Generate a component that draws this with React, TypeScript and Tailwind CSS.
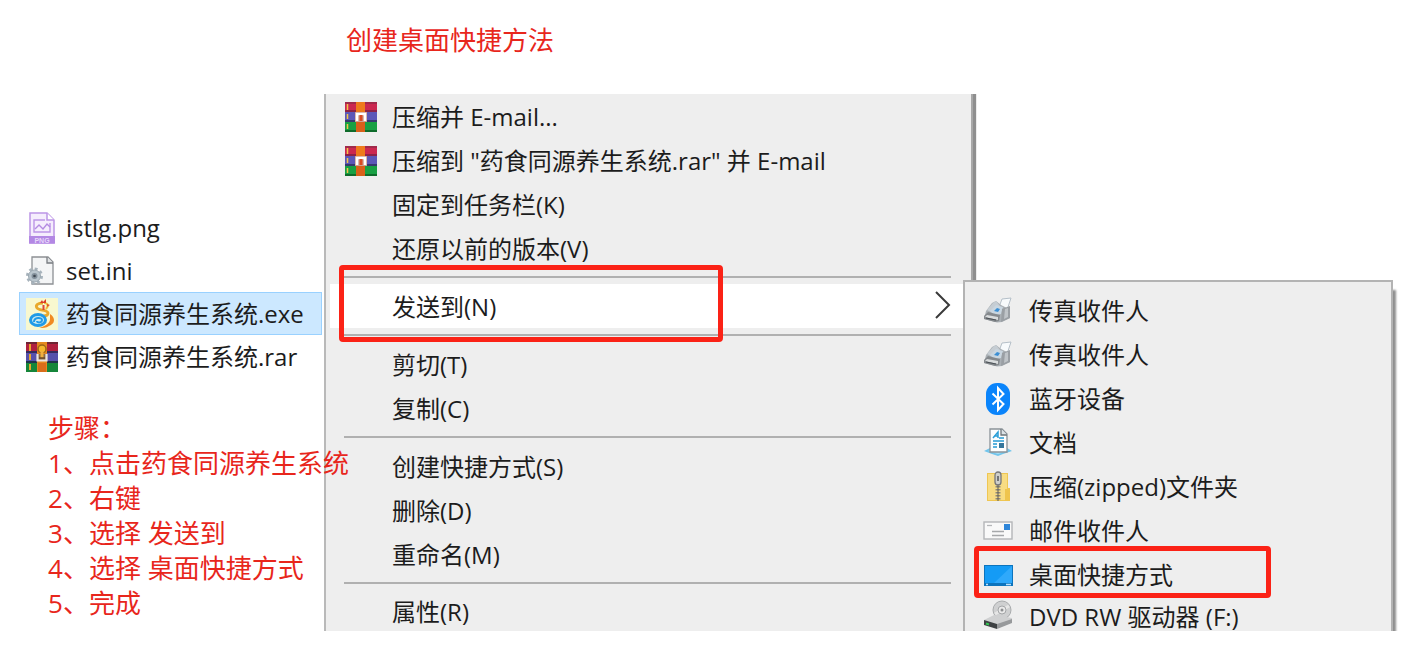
import type { ReactNode } from "react";

interface MenuEntry {
  label: string;
  icon?: ReactNode;
  boxed?: boolean;
}

function RarIcon() {
  return (
    <svg viewBox="0 0 32 30" className="h-[30px] w-8 shrink-0">
      <rect width="32" height="10" fill="#cb2750" />
      <rect width="32" height="2" fill="#a02a4a" />
      <rect y="8" width="32" height="2" fill="#8d2247" />
      <rect y="10" width="32" height="9" fill="#5b57b8" />
      <rect y="18" width="32" height="2" fill="#36396f" />
      <rect y="20" width="32" height="10" fill="#18a043" />
      <rect y="28" width="32" height="2" fill="#0e6b2a" />
      <path d="M2.500 2v6M2.500 12v5M2.500 22v5" stroke="#f3c54a" strokeWidth="1.500" />
      <rect x="11" width="9" height="30" fill="#ee7a1c" />
      <rect x="11" y="20" width="9" height="10" fill="#d8601a" />
      <rect x="10" y="10" width="12" height="10" fill="#cfa294" />
      <path d="M12 19v-7h8v7" fill="none" stroke="#fff" strokeWidth="2.500" />
      <path d="M14.500 19v-6h3v6" fill="#d94a23" />
    </svg>
  );
}

function RarFileIcon() {
  return (
    <svg viewBox="0 0 32 30" className="h-[30px] w-8 shrink-0">
      <rect width="32" height="10" fill="#b0203f" />
      <rect width="32" height="2" fill="#6e2534" />
      <rect y="10" width="32" height="10" fill="#5650ab" />
      <rect y="9" width="32" height="2" fill="#352b5c" />
      <rect y="20" width="32" height="10" fill="#16863a" />
      <rect y="19" width="32" height="2" fill="#20324b" />
      <path d="M4 2v7M4 12v6M4 22v6" stroke="#e8a72e" strokeWidth="2" />
      <rect x="11" width="10" height="30" fill="#e5891f" />
      <rect x="12" y="21" width="8" height="9" fill="#d96d1b" />
      <circle cx="16" cy="7" r="4" fill="#f6b62d" stroke="#9a6618" strokeWidth="1.500" />
      <path d="M11.500 12v6.500h9V12" fill="#8a6a45" stroke="#ece5df" strokeWidth="2.200" />
      <path d="M16 9v7" stroke="#f0b040" strokeWidth="3" />
      <path d="M13 16h6" stroke="#6b4a28" strokeWidth="1.500" />
    </svg>
  );
}

function PngIcon() {
  return (
    <svg viewBox="0 0 32 32" className="size-8 shrink-0">
      <path d="M4 1h17l7 7v23H4z" fill="#f5edfd" stroke="#bc95e6" strokeWidth="1.500" />
      <path d="M21 1v7h7" fill="#fff" stroke="#bc95e6" strokeWidth="1.500" />
      <path d="M19 8H8v12h16V11" fill="none" stroke="#bc95e6" strokeWidth="1.400" />
      <path d="m9 17 4-4 4 4 4-5 3 3" fill="none" stroke="#b48be2" strokeWidth="1.400" />
      <rect x="3" y="24" width="26" height="7.500" fill="#b388e4" />
      <text x="16" y="30.500" textAnchor="middle" fontSize="7" fontFamily="Liberation Sans, sans-serif" fontWeight="700" fill="#e7d6fa">
        PNG
      </text>
    </svg>
  );
}

function IniIcon() {
  return (
    <svg viewBox="0 0 32 32" className="size-8 shrink-0">
      <path d="M6 2h16l5 5v22H6z" fill="#f4f5f6" stroke="#8d9094" strokeWidth="1.300" />
      <path d="M21 2v6h6" fill="#dfe2e4" stroke="#777b80" strokeWidth="1.300" />
      <circle cx="8.500" cy="21" r="7" fill="none" stroke="#a7b3bc" strokeWidth="3" strokeDasharray="2.750 2.750" />
      <circle cx="8.500" cy="21" r="6" fill="#b9c5cd" stroke="#9ba8b1" />
      <circle cx="8.500" cy="21" r="3" fill="#84919c" />
      <circle cx="8.500" cy="21" r="1.300" fill="#3f4952" />
    </svg>
  );
}

function AppIcon() {
  return (
    <svg viewBox="0 0 32 32" className="size-8 shrink-0">
      <rect width="32" height="32" fill="#f8f8cf" />
      <path d="M17 5c-5 0-8 2-6 5 2 3 10 1 11 5 0 3-3 3-7 3" fill="none" stroke="#e9a92d" strokeWidth="2.800" />
      <path d="M18 5c4 0 5 3 2 6" fill="none" stroke="#f0bb3e" strokeWidth="2.200" />
      <path d="M14 5l2-3 1 2 3-3v4z" fill="#dc3b27" />
      <path d="m21 6 3 1-3 2z" fill="#e0522b" />
      <path d="M17.500 7v5" stroke="#dd4632" strokeWidth="2" />
      <ellipse cx="12" cy="22" rx="7.500" ry="5.500" fill="#c9e9ef" stroke="#1f9be8" strokeWidth="3" />
      <path d="M8 24c0-5 8-5 8-2 0 3-5 3-5 1" fill="none" stroke="#1f9be8" strokeWidth="2" />
      <path d="M24 16c6 4 5 10-1 12-3 2-6 2-10 2 7-2 11-5 11-9z" fill="#f08a22" />
    </svg>
  );
}

function FaxIcon() {
  return (
    <svg viewBox="0 0 32 32" className="size-8 shrink-0">
      <path d="M17 12 20 4l9-1-4 12z" fill="#f7fafc" stroke="#b5c0c9" />
      <path d="m4 16 6-8 4-2 5 4 6 3 3-1v11l-8 4-5 .5L2 24z" fill="#aab0b5" />
      <path d="m5 15 6-7 3-2 4 5-3 3-6 3z" fill="#c6cdd3" />
      <path d="m8 16 6-6 7 2-2 7-7 1z" fill="#c9d6e0" />
      <path d="m12 16 3-3 3 1-2 3z" fill="#3c8fd4" />
      <path d="m20 14 8-3v12l-9 4z" fill="#9a9fa4" />
      <path d="m23 14 3-1v9l-4 2z" fill="#bfc4c8" />
      <path d="m2 21 4-4 12 3-1 6-4 1-11-3z" fill="#85898d" />
      <path d="m3 22 2-2 11 2v3z" fill="#d9dcdd" />
      <path d="m4 23 10 2" stroke="#4c5257" />
    </svg>
  );
}

function BluetoothIcon() {
  return (
    <svg viewBox="0 0 32 32" className="size-8 shrink-0">
      <rect x="4" y="0" width="24" height="32" rx="11" fill="#0a84fb" />
      <path d="m10.500 10.500 11 10.500-5.500 6V5l5.500 6-11 10.500" fill="none" stroke="#fff" strokeWidth="2" />
    </svg>
  );
}

function DocumentIcon() {
  return (
    <svg viewBox="0 0 32 32" className="size-8 shrink-0">
      <path d="m2 24 6-3h17l5 3-9 3-5 2-6-2z" fill="#71c5ec" />
      <path d="m6 24 5-2h10l5 2-10 3z" fill="#a9dff5" />
      <path d="M8 2h12l5 5v18H8z" fill="#fdfefe" stroke="#8a9298" strokeWidth="1.300" />
      <path d="M19 2v6h6" fill="#dce3e7" stroke="#6e757a" strokeWidth="1.300" />
      <path d="m11 11 5-6v6M12 9h4" fill="none" stroke="#2a9fd7" strokeWidth="1.500" />
      <path d="M17 11h5M11 14h11M11 17h4M11 20h4" stroke="#269bd3" strokeWidth="1.500" />
      <path d="M17 16h5v5h-5z" fill="#35769c" />
    </svg>
  );
}

function ZipIcon() {
  return (
    <svg viewBox="0 0 32 32" className="size-8 shrink-0">
      <path d="M5 2h21v15h2v13H5z" fill="#efc653" />
      <path d="M6 3h19v26H6z" fill="#f8dc82" />
      <path d="M23 18h5v12h-5z" fill="#efc44d" />
      <path d="M16 12v18" stroke="#8f8a7c" strokeWidth="5" strokeDasharray="1.500 1.500" />
      <path d="M16 12v18" stroke="#5d5a52" strokeWidth="1" />
      <rect x="13" y="1" width="6" height="13" rx="3" fill="#cfcfca" stroke="#77777a" strokeWidth="1.300" />
      <path d="M16 5v5" stroke="#55565a" strokeWidth="1.500" />
    </svg>
  );
}

function MailIcon() {
  return (
    <svg viewBox="0 0 32 32" className="size-8 shrink-0">
      <rect x="2" y="7" width="28" height="17" fill="#f9f9f9" stroke="#b4b6b8" strokeWidth="1.400" />
      <path d="M5 10.500h5" stroke="#b5b7b9" strokeWidth="1.300" />
      <path d="M10 16.500h12M10 20.500h12" stroke="#a6a8aa" strokeWidth="1.400" />
      <rect x="22" y="9" width="6" height="6" fill="#2f86d9" />
    </svg>
  );
}

function DesktopIcon() {
  return (
    <svg viewBox="0 0 32 32" className="size-8 shrink-0">
      <rect x="2" y="6" width="29" height="21" fill="#0c74bd" />
      <rect x="3" y="7" width="27" height="17" fill="#149bf5" />
      <path d="M30 7v17H12z" fill="#2fa9fb" />
      <path d="M4 25.500h2M24 25.500h5" stroke="#b9e2ff" strokeWidth="1.300" />
    </svg>
  );
}

function DvdIcon() {
  return (
    <svg viewBox="0 0 32 32" className="size-8 shrink-0">
      <circle cx="20" cy="11" r="9" fill="#cfd0d1" stroke="#a9abad" />
      <path d="m20 11 7-4M20 11l-7 4" stroke="#e6e6e6" strokeWidth="3" />
      <circle cx="20" cy="11" r="4" fill="#e9e9e9" stroke="#a4a6a8" />
      <circle cx="20" cy="11" r="1.500" fill="#8d8f91" />
      <path d="m2 21 10-5 18 3v4l-15 6-13-5z" fill="#cfd0d1" />
      <path d="m15 25 15-5v4l-15 6z" fill="#97999b" />
      <path d="m2 21 13 4v5L2 26z" fill="#3e4143" />
      <path d="m4 24.500 3 1" stroke="#35c553" strokeWidth="2" />
    </svg>
  );
}

const files = [
  { name: "istlg.png", icon: <PngIcon /> },
  { name: "set.ini", icon: <IniIcon /> },
  { name: "药食同源养生系统.exe", icon: <AppIcon />, selected: true },
  { name: "药食同源养生系统.rar", icon: <RarFileIcon /> },
];

const steps = ["点击药食同源养生系统", "右键", "选择 发送到", "选择 桌面快捷方式", "完成"];

const menuGroups: MenuEntry[][] = [
  [
    { label: "压缩并 E-mail...", icon: <RarIcon /> },
    { label: '压缩到 "药食同源养生系统.rar" 并 E-mail', icon: <RarIcon /> },
    { label: "固定到任务栏(K)" },
    { label: "还原以前的版本(V)" },
  ],
  [{ label: "发送到(N)", boxed: true }],
  [{ label: "剪切(T)" }, { label: "复制(C)" }],
  [{ label: "创建快捷方式(S)" }, { label: "删除(D)" }, { label: "重命名(M)" }],
  [{ label: "属性(R)" }],
];

const sendTo: MenuEntry[] = [
  { label: "传真收件人", icon: <FaxIcon /> },
  { label: "传真收件人", icon: <FaxIcon /> },
  { label: "蓝牙设备", icon: <BluetoothIcon /> },
  { label: "文档", icon: <DocumentIcon /> },
  { label: "压缩(zipped)文件夹", icon: <ZipIcon /> },
  { label: "邮件收件人", icon: <MailIcon /> },
  { label: "桌面快捷方式", icon: <DesktopIcon />, boxed: true },
  { label: "DVD RW 驱动器 (F:)", icon: <DvdIcon /> },
];

function FileList() {
  return (
    <ul className="pl-[19px] pr-[2px] pt-28">
      {files.map((file) => (
        <li key={file.name}>
          <button
            className={`flex h-[43px] w-full items-center gap-2 whitespace-nowrap border pl-[6px] text-left ${
              file.selected ? "border-[#99d1ff] bg-[#cce8ff]" : "border-transparent"
            }`}
          >
            {file.icon}
            <span>{file.name}</span>
          </button>
        </li>
      ))}
    </ul>
  );
}

function Steps() {
  return (
    <div className="relative z-10 whitespace-nowrap pl-12 pt-[33px] text-[26px] leading-[35px] text-[#e8261c]">
      <p>步骤：</p>
      <ol>
        {steps.map((step, i) => (
          <li key={step}>
            {i + 1}、{step}
          </li>
        ))}
      </ol>
    </div>
  );
}

function ContextMenu() {
  return (
    <div className="mr-[2px] border-x-2 border-l-[#b9b9b9] border-r-[#a8a8a8] bg-[#eeeeee] shadow-[3px_0_1px_#8f8f8f]">
      {menuGroups.map((group, i) => (
        <ul key={i}>
          {i > 0 && <li className="ml-[18px] mr-5 my-[6px] h-[2px] bg-[#b0b0b0]" />}
          {group.map((item) => (
            <li key={item.label} className="relative px-1">
              <button
                className={`flex w-full items-center whitespace-nowrap pl-[15px] pr-4 pt-[2px] text-left ${
                  i === menuGroups.length - 1 ? "h-[41px]" : "h-11"
                } ${item.boxed ? "bg-white" : ""}`}
              >
                <span className="flex w-[47px] shrink-0">{item.icon}</span>
                <span className="flex-1">{item.label}</span>
                {item.boxed && (
                  <svg viewBox="0 0 16 28" className="mb-1 h-7 w-4" fill="none" stroke="#3a3a3a" strokeWidth="2">
                    <path d="m1 1 13 13L1 27" />
                  </svg>
                )}
              </button>
              {item.boxed && (
                <span className="pointer-events-none absolute -bottom-[14px] -top-[19px] left-[13px] w-[384px] rounded-[4px] border-[5px] border-[#fb2216]" />
              )}
            </li>
          ))}
        </ul>
      ))}
    </div>
  );
}

function SendToMenu() {
  return (
    <div className="relative -ml-3 mr-3 mt-[186px] border-2 border-b-0 border-[#b3b3b3] bg-[#eeeeee] pt-[7px] shadow-[3px_10px_2px_#8f8f8f]">
      <ul>
        {sendTo.map((item, i) => (
          <li key={i} className="relative">
            <button
              className={`flex w-full gap-[15px] whitespace-nowrap pl-[17px] text-left ${
                i === sendTo.length - 1 ? "h-[34px] items-end leading-7" : "h-11 items-center"
              }`}
            >
              {item.icon}
              <span>{item.label}</span>
            </button>
            {item.boxed && (
              <span className="pointer-events-none absolute -bottom-[1px] -top-[7px] left-[9px] z-10 w-[297px] rounded-[4px] border-[5px] border-[#fb2216]" />
            )}
          </li>
        ))}
      </ul>
    </div>
  );
}

export default function App() {
  return (
    <main className="min-h-screen bg-white font-['Open_Sans','Noto_Sans_CJK_SC',sans-serif] text-[24px] leading-8 text-[#1c1c1c]">
      <h1 className="h-[94px] pl-[346px] pt-6 text-[26px] text-[#e8261c]">创建桌面快捷方法</h1>
      <div className="grid grid-cols-[324fr_651fr_430fr] overflow-hidden">
        <section className="min-w-0">
          <FileList />
          <Steps />
        </section>
        <ContextMenu />
        <SendToMenu />
      </div>
    </main>
  );
}
